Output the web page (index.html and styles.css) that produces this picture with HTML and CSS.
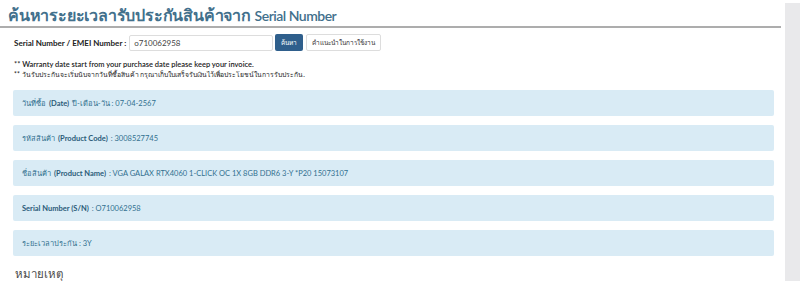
FILE: index.html
```html
<!DOCTYPE html>
<html lang="th">
<head>
    <meta charset="UTF-8">
    <meta name="viewport" content="width=device-width, initial-scale=1.0">
    <title>ค้นหาระยะเวลารับประกันสินค้า</title>
    <link rel="stylesheet" href="styles.css">
</head>
<body>
    <div class="page">
        <div class="content">
            <h2 class="title">ค้นหาระยะเวลารับประกันสินค้าจาก <span class="title-en">Serial Number</span></h2>

            <form class="search" onsubmit="return false">
                <label for="serial">Serial Number / EMEI Number :</label>
                <input type="text" id="serial" value="o710062958">
                <button type="submit" class="search-btn">ค้นหา</button>
                <button type="button" class="help-btn">คำแนะนำในการใช้งาน</button>
            </form>

            <div class="notes">
                <p class="note-en">** Warranty date start from your purchase date please keep your invoice.</p>
                <p class="note-th">** วันรับประกันจะเริ่มนับจากวันที่ซื้อสินค้า กรุณาเก็บใบเสร็จรับเงินไว้เพื่อประโยชน์ในการรับประกัน.</p>
            </div>

            <div class="result">วันที่ซื้อ <strong>(Date)</strong> ปี-เดือน-วัน : 07-04-2567</div>
            <div class="result">รหัสสินค้า <strong>(Product Code)</strong> : 3008527745</div>
            <div class="result">ชื่อสินค้า <strong>(Product Name)</strong> : VGA GALAX RTX4060 1-CLICK OC 1X 8GB DDR6 3-Y *P20 15073107</div>
            <div class="result"><strong>Serial Number (S/N)</strong> : O710062958</div>
            <div class="result">ระยะเวลาประกัน : 3Y</div>

            <h3 class="remark">หมายเหตุ</h3>
        </div>
        <div class="scroll"></div>
    </div>
</body>
</html>
```

FILE: styles.css
```css
body {
    font-family: Lato, "Noto Sans", "DejaVu Sans", sans-serif;
    margin: 0;
    padding: 0;
    background-color: #ffffff;
    color: #333;
}
.page {
    display: flex;
    height: 281px;
    overflow: hidden;
}
.content {
    flex: 1;
    padding-right: 4px;
}
.scroll {
    width: 15px;
    margin-top: 3px;
    background-color: #e9e9eb;
}
.title {
    margin: 0;
    padding: 4px 8px 0;
    font-size: 16px;
    font-weight: 600;
    letter-spacing: -0.2px;
    color: #42708c;
    border-bottom: 2px solid #adadad;
    line-height: 21px;
}
.title-en {
    font-size: 14px;
    letter-spacing: -0.5px;
}
.search {
    display: flex;
    align-items: center;
    padding: 6px 14px 0;
}
.search label {
    font-size: 8px;
    font-weight: bold;
    color: #222;
    margin-right: 3px;
}
.search input {
    width: 144px;
    height: 16px;
    padding: 0 4px;
    border: 1px solid #ddd;
    border-radius: 2px;
    font-family: inherit;
    font-size: 8px;
    color: #444;
    box-sizing: border-box;
}
.search-btn {
    margin-left: 2px;
    height: 17px;
    width: 28px;
    padding: 0;
    border: none;
    border-radius: 2px;
    background-color: #2f5f8c;
    color: white;
    font-family: inherit;
    font-size: 6.5px;
}
.help-btn {
    margin-left: 3px;
    height: 17px;
    width: 75px;
    padding: 0;
    border: 1px solid #ddd;
    border-radius: 2px;
    background-color: white;
    color: #333;
    font-family: inherit;
    font-size: 6.5px;
}
.notes {
    padding: 9px 14px 11px;
}
.notes p {
    margin: 0;
    color: #222;
}
.note-en {
    font-size: 7.5px;
    font-weight: 600;
    line-height: 10px;
}
.note-th {
    font-size: 6.8px;
    line-height: 9px;
}
.result {
    margin: 0 7px 9px 13px;
    height: 26px;
    padding: 0 9px;
    display: flex;
    align-items: center;
    gap: 3px;
    background-color: #d9ebf5;
    border-radius: 2px;
    color: #31708f;
    font-size: 7.5px;
}
.result strong {
    color: #2a5a78;
}
.remark {
    margin: 5px 7px 0 13px;
    padding: 0 2px 2px;
    font-size: 11.5px;
    font-weight: normal;
    color: #4a4a4a;
    border-bottom: 1px solid #e5e5e5;
}
```
